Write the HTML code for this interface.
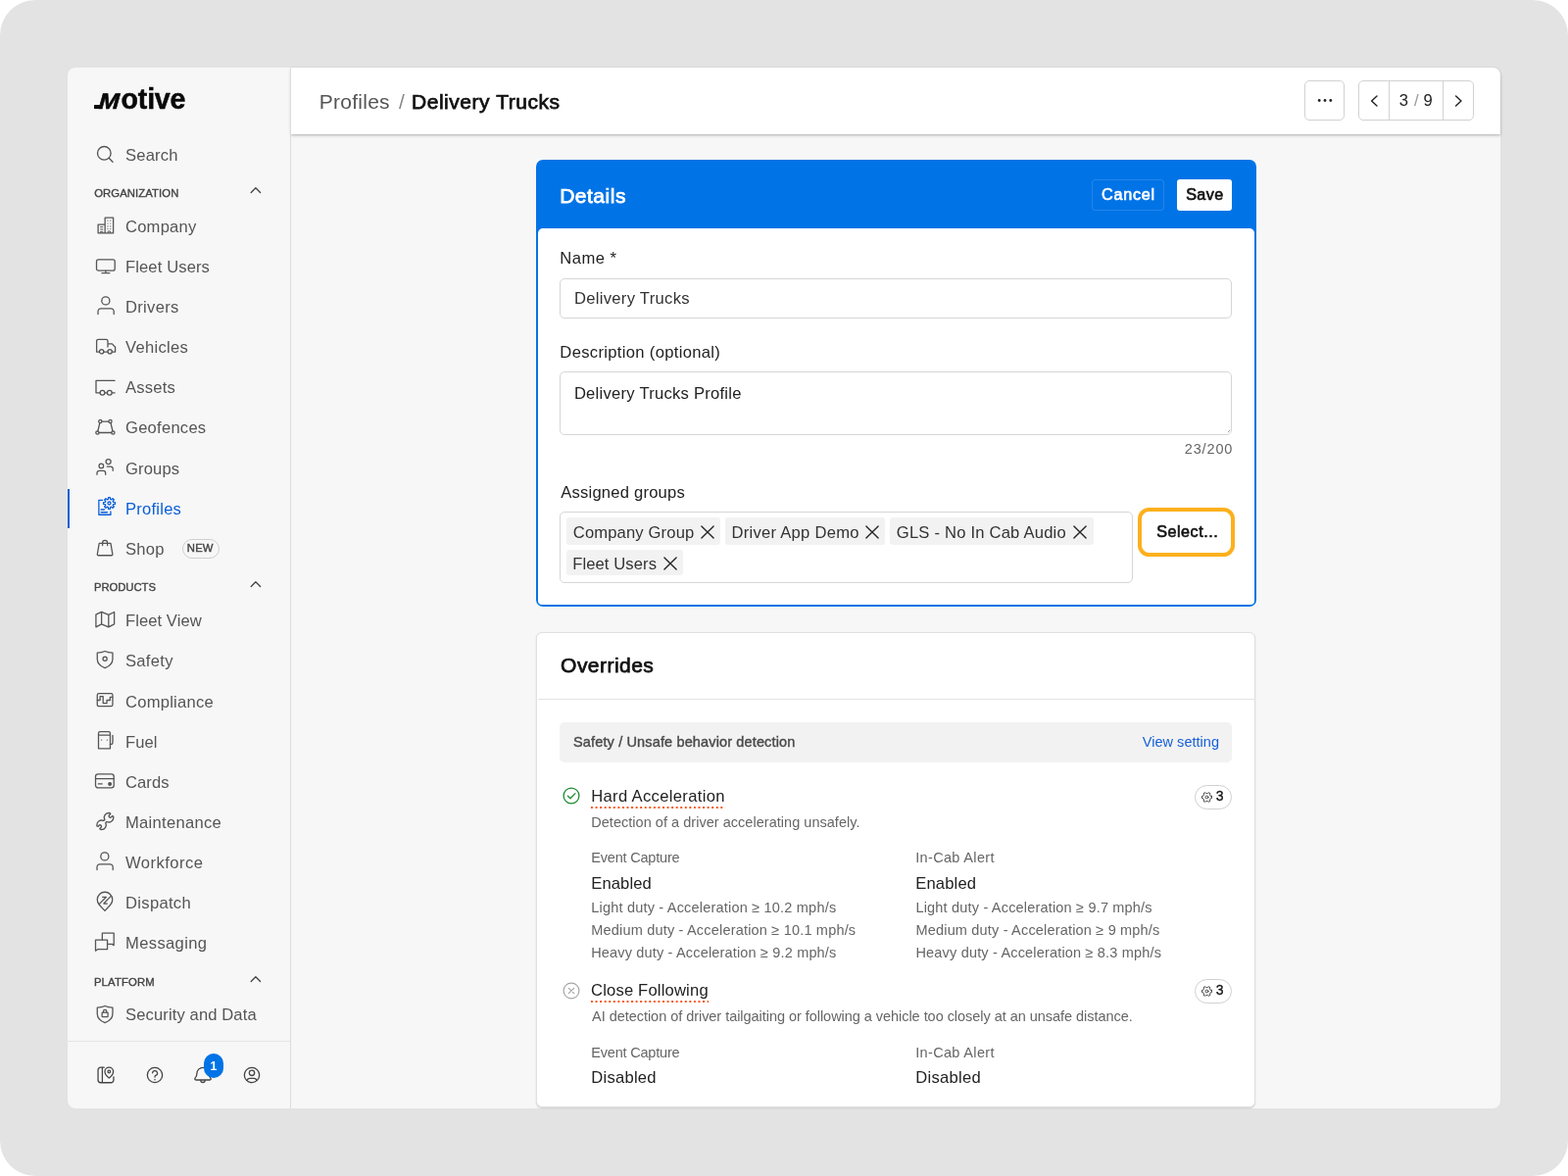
<!DOCTYPE html>
<html lang="en">
<head>
<meta charset="utf-8">
<title>Profiles / Delivery Trucks</title>
<style>
*{box-sizing:border-box;margin:0;padding:0}
html,body{width:1600px;height:1200px;overflow:hidden;background:#fff}
body{font-family:"Liberation Sans",Arial,sans-serif;position:relative;will-change:transform}
body div,body span,body svg,body nav,body header,body main,body section,body button,body h1,body h2,body h3,body p,body a,body label{position:absolute;display:block}
.t{white-space:pre;font-kerning:normal}
button{font:inherit;border:0;background:none}
h1,h2,h3,p{font-weight:400}
a{text-decoration:none}
.g{left:0;top:0;width:0;height:0}
</style>
</head>
<body>
<div style="left:0px;top:0px;width:1600px;height:1200px;background:#e3e3e3;border-radius:36px"></div>
<div style="left:69px;top:69px;width:1462px;height:1062px;background:#f7f7f7;border-radius:8px"></div>
<main class="g">
<section class="g">
<div style="left:547px;top:163px;width:735px;height:456.3px;background:#0073e6;border-radius:7px"></div>
<div style="left:549px;top:233px;width:731px;height:384.2px;background:#fff;border-radius:5px 5px 4px 4px"></div>
<h2 class="t" style="left:571.14px;top:186px;font-size:21px;line-height:27px;color:#fff;letter-spacing:0.523px;-webkit-text-stroke:0.75px #fff;">Details</h2>
<div style="left:1113.6px;top:183px;width:74px;height:32px;border:1px solid rgba(255,255,255,.14);border-radius:3px"></div>
<button class="t" style="left:1124.01px;top:188px;font-size:16.2px;line-height:21px;color:#fff;letter-spacing:0.750px;-webkit-text-stroke:0.62px #fff;">Cancel</button>
<div style="left:1201px;top:182.6px;width:56px;height:32.4px;background:#fff;border-radius:3px"></div>
<button class="t" style="left:1210.21px;top:188px;font-size:16.2px;line-height:21px;color:#111;letter-spacing:0.362px;-webkit-text-stroke:0.62px #111;">Save</button>
<label class="t" style="left:571.33px;top:253px;font-size:16.6px;line-height:22px;color:#222;letter-spacing:0.456px;">Name *</label>
<div style="left:571px;top:283.5px;width:686px;height:41px;border:1px solid #d6d6d6;border-radius:5px;background:#fff"></div>
<span class="t" style="left:585.89px;top:294px;font-size:16.6px;line-height:22px;color:#333;letter-spacing:0.305px;">Delivery Trucks</span>
<label class="t" style="left:571.33px;top:349px;font-size:16.6px;line-height:22px;color:#222;letter-spacing:0.320px;">Description (optional)</label>
<div style="left:571px;top:379px;width:686px;height:64.5px;border:1px solid #d6d6d6;border-radius:5px;background:#fff"></div>
<span class="t" style="left:585.89px;top:391px;font-size:16.6px;line-height:22px;color:#222;letter-spacing:0.251px;">Delivery Trucks Profile</span>
<svg style="left:1250px;top:436px" width="6" height="6" viewBox="0 0 6 6" fill="none" stroke="#8a8a8a" stroke-width="0.9" stroke-linecap="round" stroke-linejoin="round" aria-hidden="true"><path d="M4.9 3.2 L3.2 4.9"/></svg>
<span class="t" style="left:1208.71px;top:449px;font-size:14.5px;line-height:19px;color:#666;letter-spacing:0.870px;">23/200</span>
<label class="t" style="left:572.25px;top:492px;font-size:16.6px;line-height:22px;color:#222;letter-spacing:0.205px;">Assigned groups</label>
<div style="left:571px;top:522px;width:585px;height:73px;border:1px solid #d6d6d6;border-radius:5px;background:#fff"></div>
<div style="left:578.1px;top:528.4px;width:156.9px;height:27.2px;background:#f2f2f2;border-radius:3px"></div>
<span class="t" style="left:584.77px;top:533px;font-size:16.6px;line-height:22px;color:#333;letter-spacing:0.143px;">Company Group</span>
<svg style="left:713.9px;top:535px" width="16" height="16" viewBox="0 0 16 16" fill="none" stroke="#222" stroke-width="1.35" stroke-linecap="round" stroke-linejoin="round" aria-hidden="true"><path d="M1.9 1.9 L14.1 14.1 M14.1 1.9 L1.9 14.1"/></svg>
<div style="left:739.8px;top:528.4px;width:163.2px;height:27.2px;background:#f2f2f2;border-radius:3px"></div>
<span class="t" style="left:746.52px;top:533px;font-size:16.6px;line-height:22px;color:#333;letter-spacing:0.257px;">Driver App Demo</span>
<svg style="left:882.25px;top:535px" width="16" height="16" viewBox="0 0 16 16" fill="none" stroke="#222" stroke-width="1.35" stroke-linecap="round" stroke-linejoin="round" aria-hidden="true"><path d="M1.9 1.9 L14.1 14.1 M14.1 1.9 L1.9 14.1"/></svg>
<div style="left:907.5px;top:528.4px;width:208px;height:27.2px;background:#f2f2f2;border-radius:3px"></div>
<span class="t" style="left:914.82px;top:533px;font-size:16.6px;line-height:22px;color:#333;letter-spacing:0.204px;">GLS - No In Cab Audio</span>
<svg style="left:1093.75px;top:535px" width="16" height="16" viewBox="0 0 16 16" fill="none" stroke="#222" stroke-width="1.35" stroke-linecap="round" stroke-linejoin="round" aria-hidden="true"><path d="M1.9 1.9 L14.1 14.1 M14.1 1.9 L1.9 14.1"/></svg>
<div style="left:578.1px;top:560.6px;width:119.4px;height:26.9px;background:#f2f2f2;border-radius:3px"></div>
<span class="t" style="left:584.17px;top:565px;font-size:16.6px;line-height:22px;color:#333;letter-spacing:0.098px;">Fleet Users</span>
<svg style="left:676.4px;top:567px" width="16" height="16" viewBox="0 0 16 16" fill="none" stroke="#222" stroke-width="1.35" stroke-linecap="round" stroke-linejoin="round" aria-hidden="true"><path d="M1.9 1.9 L14.1 14.1 M14.1 1.9 L1.9 14.1"/></svg>
<div style="left:1160.8px;top:517.8px;width:99.4px;height:50px;border:4.4px solid #fcb01e;border-radius:11.5px;background:#fff"></div>
<button class="t" style="left:1180.14px;top:532px;font-size:16.2px;line-height:21px;color:#111;letter-spacing:0.509px;-webkit-text-stroke:0.62px #111;">Select...</button>
</section>
<section class="g">
<div style="left:547px;top:644.5px;width:733.5px;height:485.5px;background:#fff;border:1px solid #e0e0e0;border-radius:6px;box-shadow:0 1px 1.5px rgba(0,0,0,.16)"></div>
<h2 class="t" style="left:572.10px;top:665px;font-size:21px;line-height:27px;color:#111;letter-spacing:0.467px;-webkit-text-stroke:0.75px #111;">Overrides</h2>
<div style="left:548.5px;top:713px;width:731px;height:1px;background:#e4e4e4"></div>
<div style="left:571.4px;top:737px;width:685.6px;height:40.6px;background:#f2f2f2;border-radius:5px"></div>
<span class="t" style="left:585.06px;top:748px;font-size:14.5px;line-height:19px;color:#4a4a4a;letter-spacing:0.139px;-webkit-text-stroke:0.4px #4a4a4a;">Safety / Unsafe behavior detection</span>
<a class="t" style="left:1165.82px;top:748px;font-size:14.5px;line-height:19px;color:#1660d8;letter-spacing:0.020px;">View setting</a>
<svg style="left:572.75px;top:802.4px" width="20" height="20" viewBox="0 0 20 20" fill="none" stroke="#1e8a2e" stroke-width="1.3" stroke-linecap="round" stroke-linejoin="round" aria-hidden="true"><circle cx="10" cy="10" r="7.9"/><path d="M6.4 10.3 L9 12.7 L13.9 7.6"/></svg>
<h3 class="t" style="left:603.21px;top:802px;font-size:16.6px;line-height:22px;color:#222;letter-spacing:0.330px;">Hard Acceleration</h3>
<div style="left:603.2px;top:823.4px;width:136.5px;height:2.4px;background:radial-gradient(circle at 1.2px 1.2px,#f4571b 0.95px,rgba(244,87,27,0) 1.3px) 0 0/4.57px 2.4px repeat-x"></div>
<p class="t" style="left:603.23px;top:830px;font-size:14.5px;line-height:19px;color:#666;letter-spacing:0.031px;">Detection of a driver accelerating unsafely.</p>
<span class="t" style="left:603.23px;top:866px;font-size:14.5px;line-height:19px;color:#666;letter-spacing:-0.188px;">Event Capture</span>
<span class="t" style="left:934.21px;top:866px;font-size:14.5px;line-height:19px;color:#666;letter-spacing:0.340px;">In-Cab Alert</span>
<span class="t" style="left:603.21px;top:891px;font-size:16.6px;line-height:22px;color:#222;letter-spacing:0.109px;">Enabled</span>
<span class="t" style="left:934.17px;top:891px;font-size:16.6px;line-height:22px;color:#222;letter-spacing:0.174px;">Enabled</span>
<span class="t" style="left:603.23px;top:917px;font-size:14.5px;line-height:19px;color:#666;letter-spacing:0.200px;">Light duty - Acceleration ≥ 10.2 mph/s</span>
<span class="t" style="left:603.23px;top:940px;font-size:14.5px;line-height:19px;color:#666;letter-spacing:0.191px;">Medium duty - Acceleration ≥ 10.1 mph/s</span>
<span class="t" style="left:603.23px;top:963px;font-size:14.5px;line-height:19px;color:#666;letter-spacing:0.166px;">Heavy duty - Acceleration ≥ 9.2 mph/s</span>
<span class="t" style="left:934.47px;top:917px;font-size:14.5px;line-height:19px;color:#666;letter-spacing:0.185px;">Light duty - Acceleration ≥ 9.7 mph/s</span>
<span class="t" style="left:934.47px;top:940px;font-size:14.5px;line-height:19px;color:#666;letter-spacing:0.182px;">Medium duty - Acceleration ≥ 9 mph/s</span>
<span class="t" style="left:934.47px;top:963px;font-size:14.5px;line-height:19px;color:#666;letter-spacing:0.176px;">Heavy duty - Acceleration ≥ 8.3 mph/s</span>
<div style="left:1219px;top:801px;width:37.6px;height:24.6px;border:1px solid #d0d0d0;border-radius:13px;background:#fff"></div>
<svg style="left:1224.5px;top:806.6px" width="13" height="13" viewBox="0 0 13 13" fill="none" stroke="#333" stroke-width="0.9" stroke-linecap="round" stroke-linejoin="round" aria-hidden="true"><path d="M11.49 5.44 L11.49 7.56 L10.28 7.82 L9.53 9.11 L9.91 10.29 L8.08 11.35 L7.25 10.43 L5.75 10.43 L4.92 11.35 L3.09 10.29 L3.47 9.11 L2.72 7.82 L1.51 7.56 L1.51 5.44 L2.72 5.18 L3.47 3.89 L3.09 2.71 L4.92 1.65 L5.75 2.57 L7.25 2.57 L8.08 1.65 L9.91 2.71 L9.53 3.89 L10.28 5.18 Z" stroke-linejoin="round"/><circle cx="6.5" cy="6.5" r="1.4"/></svg>
<span class="t" style="left:1240.84px;top:803px;font-size:14px;line-height:18px;color:#111;-webkit-text-stroke:0.3px #111;">3</span>
<svg style="left:572.75px;top:1000.55px" width="20" height="20" viewBox="0 0 20 20" fill="none" stroke="#a6a6a6" stroke-width="1.2" stroke-linecap="round" stroke-linejoin="round" aria-hidden="true"><circle cx="10" cy="10" r="7.9"/><path d="M7.3 7.3 L12.7 12.7 M12.7 7.3 L7.3 12.7"/></svg>
<h3 class="t" style="left:603.00px;top:1000px;font-size:16.6px;line-height:22px;color:#222;letter-spacing:0.177px;">Close Following</h3>
<div style="left:603.2px;top:1021.4px;width:119.6px;height:2.4px;background:radial-gradient(circle at 1.2px 1.2px,#f4571b 0.95px,rgba(244,87,27,0) 1.3px) 0 0/4.57px 2.4px repeat-x"></div>
<p class="t" style="left:604.08px;top:1028px;font-size:14.5px;line-height:19px;color:#666;letter-spacing:-0.041px;">AI detection of driver tailgaiting or following a vehicle too closely at an unsafe distance.</p>
<span class="t" style="left:603.23px;top:1065px;font-size:14.5px;line-height:19px;color:#666;letter-spacing:-0.188px;">Event Capture</span>
<span class="t" style="left:934.21px;top:1065px;font-size:14.5px;line-height:19px;color:#666;letter-spacing:0.340px;">In-Cab Alert</span>
<span class="t" style="left:603.21px;top:1089px;font-size:16.6px;line-height:22px;color:#222;letter-spacing:0.258px;">Disabled</span>
<span class="t" style="left:934.17px;top:1089px;font-size:16.6px;line-height:22px;color:#222;letter-spacing:0.294px;">Disabled</span>
<div style="left:1219px;top:999.2px;width:37.6px;height:24.6px;border:1px solid #d0d0d0;border-radius:13px;background:#fff"></div>
<svg style="left:1224.5px;top:1004.8px" width="13" height="13" viewBox="0 0 13 13" fill="none" stroke="#333" stroke-width="0.9" stroke-linecap="round" stroke-linejoin="round" aria-hidden="true"><path d="M11.49 5.44 L11.49 7.56 L10.28 7.82 L9.53 9.11 L9.91 10.29 L8.08 11.35 L7.25 10.43 L5.75 10.43 L4.92 11.35 L3.09 10.29 L3.47 9.11 L2.72 7.82 L1.51 7.56 L1.51 5.44 L2.72 5.18 L3.47 3.89 L3.09 2.71 L4.92 1.65 L5.75 2.57 L7.25 2.57 L8.08 1.65 L9.91 2.71 L9.53 3.89 L10.28 5.18 Z" stroke-linejoin="round"/><circle cx="6.5" cy="6.5" r="1.4"/></svg>
<span class="t" style="left:1240.84px;top:1001px;font-size:14px;line-height:18px;color:#111;-webkit-text-stroke:0.3px #111;">3</span>
</section>
</main>
<header class="g">
<div style="left:297px;top:69px;width:1234px;height:68px;background:#fff;border-radius:0 8px 0 0;box-shadow:0 1px 2.5px rgba(0,0,0,.24),0 2px 5px rgba(0,0,0,.07)"></div>
<span class="t" style="left:325.79px;top:90px;font-size:21px;line-height:27px;color:#555;letter-spacing:0.251px;">Profiles</span>
<span class="t" style="left:407.08px;top:90px;font-size:21px;line-height:27px;color:#888;">/</span>
<h1 class="t" style="left:420.00px;top:90px;font-size:21px;line-height:27px;color:#111;letter-spacing:0.536px;-webkit-text-stroke:0.75px #111;">Delivery Trucks</h1>
<div style="left:1331px;top:82.3px;width:41px;height:41px;border:1px solid #d2d2d2;border-radius:5px;background:#fff"></div>
<svg style="left:1343px;top:98.2px" width="18" height="9" viewBox="0 0 18 9" fill="none" stroke="none" stroke-width="0" stroke-linecap="round" stroke-linejoin="round" aria-hidden="true"><circle cx="3.2" cy="4.5" r="1.4" fill="#222"/><circle cx="9" cy="4.5" r="1.4" fill="#222"/><circle cx="14.8" cy="4.5" r="1.4" fill="#222"/></svg>
<div style="left:1386px;top:82.3px;width:118px;height:41px;border:1px solid #d2d2d2;border-radius:5px;background:#fff"></div>
<div style="left:1417.2px;top:83.3px;width:1px;height:39px;background:#d2d2d2"></div>
<div style="left:1472.2px;top:83.3px;width:1px;height:39px;background:#d2d2d2"></div>
<svg style="left:1393.6px;top:95px" width="16" height="16" viewBox="0 0 16 16" fill="none" stroke="#222" stroke-width="1.4" stroke-linecap="round" stroke-linejoin="round" aria-hidden="true"><path d="M11 3 L5.6 8 L11 13"/></svg>
<svg style="left:1480.2px;top:95px" width="16" height="16" viewBox="0 0 16 16" fill="none" stroke="#222" stroke-width="1.4" stroke-linecap="round" stroke-linejoin="round" aria-hidden="true"><path d="M5.6 3 L11 8 L5.6 13"/></svg>
<span class="t" style="left:1427.82px;top:92px;font-size:16.6px;line-height:22px;color:#222;">3</span>
<span class="t" style="left:1442.95px;top:92px;font-size:16.6px;line-height:22px;color:#999;">/</span>
<span class="t" style="left:1452.53px;top:92px;font-size:16.6px;line-height:22px;color:#222;">9</span>
</header>
<nav class="g">
<div style="left:296px;top:69px;width:1px;height:1062px;background:#dcdcdc"></div>
<div style="left:69px;top:1062px;width:227px;height:1px;background:#e4e4e4"></div>
<div style="left:69px;top:498.7px;width:1.6px;height:40.7px;background:#0b5fd9"></div>
<div class="g">
<div style="left:96.1px;top:107.4px;width:7.4px;height:3.9px;background:#0a0a0a;border-radius:0.5px"></div>
<span class="t" style="left:100.32px;top:89px;font-size:22.4px;line-height:29px;color:#0a0a0a;font-weight:700;-webkit-text-stroke:0.6px #0a0a0a;font-style:italic;transform-origin:0 100%;transform:scaleX(1.12) skewX(-3deg);">M</span><span class="t" style="left:123.60px;top:83px;font-size:28.6px;line-height:37px;color:#0a0a0a;font-weight:700;letter-spacing:-0.223px;-webkit-text-stroke:0.5px #0a0a0a;">otive</span>
</div>
<svg style="left:97px;top:147px" width="20" height="20" viewBox="0 0 20 20" fill="none" stroke="#555" stroke-width="1.35" stroke-linecap="round" stroke-linejoin="round" aria-hidden="true"><circle cx="9.3" cy="9.3" r="6.8"/><path d="M14.2 14.3 L18 18.2"/></svg>
<span class="t" style="left:128.00px;top:148px;font-size:16.6px;line-height:22px;color:#555;letter-spacing:0.182px;">Search</span>
<span class="t" style="left:96.24px;top:190px;font-size:11.3px;line-height:15px;color:#444;letter-spacing:0.083px;-webkit-text-stroke:0.36px #444;">ORGANIZATION</span>
<svg style="left:254px;top:188.9px" width="14" height="10" viewBox="0 0 14 10" fill="none" stroke="#444" stroke-width="1.3" stroke-linecap="round" stroke-linejoin="round" aria-hidden="true"><path d="M2.2 7.5 L6.9 2.7 L11.6 7.5"/></svg>
<span class="t" style="left:128.00px;top:221px;font-size:16.6px;line-height:22px;color:#555;letter-spacing:0.197px;">Company</span>
<span class="t" style="left:128.00px;top:262px;font-size:16.6px;line-height:22px;color:#555;letter-spacing:0.106px;">Fleet Users</span>
<span class="t" style="left:128.00px;top:303px;font-size:16.6px;line-height:22px;color:#555;letter-spacing:0.296px;">Drivers</span>
<span class="t" style="left:128.00px;top:344px;font-size:16.6px;line-height:22px;color:#555;letter-spacing:0.298px;">Vehicles</span>
<span class="t" style="left:128.00px;top:385px;font-size:16.6px;line-height:22px;color:#555;letter-spacing:0.218px;">Assets</span>
<span class="t" style="left:128.00px;top:426px;font-size:16.6px;line-height:22px;color:#555;letter-spacing:0.236px;">Geofences</span>
<span class="t" style="left:128.00px;top:468px;font-size:16.6px;line-height:22px;color:#555;letter-spacing:0.146px;">Groups</span>
<span class="t" style="left:128.00px;top:509px;font-size:16.6px;line-height:22px;color:#0b5fd9;letter-spacing:0.223px;">Profiles</span>
<span class="t" style="left:128.00px;top:550px;font-size:16.6px;line-height:22px;color:#555;letter-spacing:0.241px;">Shop</span>
<div style="left:185.5px;top:550.4px;width:38.5px;height:19.8px;border:1px solid #cfcfcf;border-radius:10px"></div>
<span class="t" style="left:190.79px;top:552px;font-size:11.3px;line-height:15px;color:#444;letter-spacing:0.192px;-webkit-text-stroke:0.4px #444;">NEW</span>
<span class="t" style="left:95.91px;top:592px;font-size:11.3px;line-height:15px;color:#444;letter-spacing:-0.044px;-webkit-text-stroke:0.36px #444;">PRODUCTS</span>
<svg style="left:254px;top:591px" width="14" height="10" viewBox="0 0 14 10" fill="none" stroke="#444" stroke-width="1.3" stroke-linecap="round" stroke-linejoin="round" aria-hidden="true"><path d="M2.2 7.5 L6.9 2.7 L11.6 7.5"/></svg>
<span class="t" style="left:128.00px;top:623px;font-size:16.6px;line-height:22px;color:#555;letter-spacing:0.060px;">Fleet View</span>
<span class="t" style="left:128.00px;top:664px;font-size:16.6px;line-height:22px;color:#555;letter-spacing:0.284px;">Safety</span>
<span class="t" style="left:128.00px;top:706px;font-size:16.6px;line-height:22px;color:#555;letter-spacing:0.231px;">Compliance</span>
<span class="t" style="left:128.00px;top:747px;font-size:16.6px;line-height:22px;color:#555;letter-spacing:0.022px;">Fuel</span>
<span class="t" style="left:128.00px;top:788px;font-size:16.6px;line-height:22px;color:#555;letter-spacing:0.067px;">Cards</span>
<span class="t" style="left:128.00px;top:829px;font-size:16.6px;line-height:22px;color:#555;letter-spacing:0.268px;">Maintenance</span>
<span class="t" style="left:128.00px;top:870px;font-size:16.6px;line-height:22px;color:#555;letter-spacing:0.463px;">Workforce</span>
<span class="t" style="left:128.00px;top:911px;font-size:16.6px;line-height:22px;color:#555;letter-spacing:0.303px;">Dispatch</span>
<span class="t" style="left:128.00px;top:952px;font-size:16.6px;line-height:22px;color:#555;letter-spacing:0.349px;">Messaging</span>
<span class="t" style="left:95.91px;top:995px;font-size:11.3px;line-height:15px;color:#444;letter-spacing:0.167px;-webkit-text-stroke:0.36px #444;">PLATFORM</span>
<svg style="left:254px;top:993.5px" width="14" height="10" viewBox="0 0 14 10" fill="none" stroke="#444" stroke-width="1.3" stroke-linecap="round" stroke-linejoin="round" aria-hidden="true"><path d="M2.2 7.5 L6.9 2.7 L11.6 7.5"/></svg>
<span class="t" style="left:128.00px;top:1025px;font-size:16.6px;line-height:22px;color:#555;letter-spacing:0.110px;">Security and Data</span>
<svg style="left:96px;top:218px" width="24" height="24" viewBox="0 0 24 24" fill="none" stroke="#555" stroke-width="1.3" stroke-linecap="round" stroke-linejoin="round" aria-hidden="true"><path d="M11.15 19.85 V4.15 H19.6 V19.85 H4.1 V11.2 H11.15"/><path d="M14 7.1h.01M16.8 7.1h.01M14 10h.01M16.8 10h.01M14 12.9h.01M16.8 12.9h.01M14 15.6h.01M16.8 15.6h.01" stroke-width="1.2"/><path d="M6.6 13.6 H8.8 M6.6 16 H8.8" stroke-width="1"/><path d="M6.4 19.6 V18.3 H8.8 V19.6 M14.2 19.6 V18 H16.6 V19.6" stroke-width="1"/></svg>
<svg style="left:96px;top:259.14px" width="24" height="24" viewBox="0 0 24 24" fill="none" stroke="#555" stroke-width="1.3" stroke-linecap="round" stroke-linejoin="round" aria-hidden="true"><rect x="2.5" y="5.9" width="18.7" height="11.2" rx="1.9"/><path d="M11.85 17.2 V19.5 M8 19.7 H15.8"/></svg>
<svg style="left:96px;top:300.28px" width="24" height="24" viewBox="0 0 24 24" fill="none" stroke="#555" stroke-width="1.3" stroke-linecap="round" stroke-linejoin="round" aria-hidden="true"><circle cx="11.85" cy="6.9" r="4.05"/><path d="M4 20.6 V17.7 A2.9 2.9 0 0 1 6.9 14.8 H17.3 A2.9 2.9 0 0 1 20.2 17.7 V20.6"/></svg>
<svg style="left:96px;top:341.42px" width="24" height="24" viewBox="0 0 24 24" fill="none" stroke="#555" stroke-width="1.3" stroke-linecap="round" stroke-linejoin="round" aria-hidden="true"><path d="M5.5 18.1 H2.6 V7.1 A1.8 1.8 0 0 1 4.4 5.3 H12.2 A1.8 1.8 0 0 1 14 7.1 V13.1 M9.8 18.1 H14 M18.3 18.1 H21.6 V13.2 L18.4 9.9 H14"/><circle cx="7.65" cy="17.8" r="2.15"/><circle cx="16.15" cy="17.8" r="2.15"/></svg>
<svg style="left:96px;top:382.56px" width="24" height="24" viewBox="0 0 24 24" fill="none" stroke="#555" stroke-width="1.3" stroke-linecap="round" stroke-linejoin="round" aria-hidden="true"><path d="M21.1 5.3 H2 V17.8 H6 M11 17.8 H13.3 M18.3 17.8 H21.1"/><circle cx="8.5" cy="17.8" r="2.4"/><circle cx="15.8" cy="17.8" r="2.4"/></svg>
<svg style="left:96px;top:423.7px" width="24" height="24" viewBox="0 0 24 24" fill="none" stroke="#555" stroke-width="1.3" stroke-linecap="round" stroke-linejoin="round" aria-hidden="true"><path d="M7.8 6.2 H14.9 M16.95 7.5 L19 16 M17.8 17.5 H5 M3.8 16 L5.85 7.5"/><circle cx="6.25" cy="6" r="1.6"/><circle cx="16.5" cy="6" r="1.6"/><circle cx="3.4" cy="17.5" r="1.6"/><circle cx="19.4" cy="17.5" r="1.6"/></svg>
<svg style="left:95.3px;top:464.34px" width="24" height="24" viewBox="0 0 24 24" fill="none" stroke="#555" stroke-width="1.3" stroke-linecap="round" stroke-linejoin="round" aria-hidden="true"><circle cx="15.6" cy="7.05" r="2.5"/><circle cx="8.35" cy="11.4" r="2.3"/><path d="M14.2 12.1 H17.9 A2.3 2.3 0 0 1 20.2 14.4 V16.3 M4 20.3 V18.7 A2.3 2.3 0 0 1 6.3 16.4 H10.4 A2.3 2.3 0 0 1 12.7 18.7 V20.3"/></svg>
<svg style="left:95.4px;top:547.12px" width="24" height="24" viewBox="0 0 24 24" fill="none" stroke="#555" stroke-width="1.3" stroke-linecap="round" stroke-linejoin="round" aria-hidden="true"><path d="M6.2 7.3 H17.95 L19.9 18.6 A1 1 0 0 1 18.9 19.75 H5.3 A1 1 0 0 1 4.3 18.6 Z"/><path d="M9.6 9.6 V6.9 A2.5 2.5 0 0 1 14.6 6.9 V9.6"/></svg>
<svg style="left:95.4px;top:620.2px" width="24" height="24" viewBox="0 0 24 24" fill="none" stroke="#555" stroke-width="1.3" stroke-linecap="round" stroke-linejoin="round" aria-hidden="true"><path d="M2.9 7.2 L8.6 4.4 L15.8 7.3 L21.6 4.5 V16.8 L15.8 19.8 L8.6 16.9 L2.9 19.8 Z M8.6 4.4 V16.9 M15.8 7.3 V19.8"/></svg>
<svg style="left:95.4px;top:661.34px" width="24" height="24" viewBox="0 0 24 24" fill="none" stroke="#555" stroke-width="1.3" stroke-linecap="round" stroke-linejoin="round" aria-hidden="true"><path d="M12.1 3.5 C9.4 4.7 7 5 4.25 5.1 V11.6 C4.25 15.8 7.2 18.8 12.1 20.7 C17 18.8 19.95 15.8 19.95 11.6 V5.1 C17.2 5 14.8 4.7 12.1 3.5 Z"/><circle cx="12.1" cy="11.35" r="2.1"/></svg>
<svg style="left:95.4px;top:702.48px" width="24" height="24" viewBox="0 0 24 24" fill="none" stroke="#555" stroke-width="1.3" stroke-linecap="round" stroke-linejoin="round" aria-hidden="true"><rect x="4.25" y="5.6" width="15.7" height="13.1" rx="1.7"/><path d="M4.4 12.5 H7.1 V8.7 H10.2 V15.6 H14 V12.5 H17.35 V9.35 H19.8"/></svg>
<svg style="left:95.4px;top:743.62px" width="24" height="24" viewBox="0 0 24 24" fill="none" stroke="#555" stroke-width="1.3" stroke-linecap="round" stroke-linejoin="round" aria-hidden="true"><path d="M5.5 19.8 V4.2 A1.6 1.6 0 0 1 7.1 2.6 H15.85 A1.6 1.6 0 0 1 17.45 4.2 V19.8 Z M5.5 6.2 H17.45"/><path d="M17.45 15.4 H18.4 A1.6 1.6 0 0 0 20 13.8 V6.4"/><path d="M8.6 11.1h.01M14.35 11.1h.01" stroke-width="1.4"/></svg>
<svg style="left:95.4px;top:784.76px" width="24" height="24" viewBox="0 0 24 24" fill="none" stroke="#555" stroke-width="1.3" stroke-linecap="round" stroke-linejoin="round" aria-hidden="true"><rect x="2.5" y="4.85" width="18.7" height="14.1" rx="2.6"/><path d="M2.6 9.55 H21.1 M5.4 14.95 H9.2"/><circle cx="17.1" cy="14.95" r="1.35" fill="#555"/></svg>
<svg style="left:95.4px;top:825.9px" width="24" height="24" viewBox="0 0 24 24" fill="none" stroke="#555" stroke-width="1.3" stroke-linecap="round" stroke-linejoin="round" aria-hidden="true"><path transform="translate(12.3 12.0) rotate(-45) scale(1.06)" d="M-0.72 -1.4 L0.72 -1.4 A4.5 4.5 0 0 1 8.3 -3.05 Q9.3 -2.1 8.6 -1.35 L7.0 -1.35 A1.35 1.35 0 0 0 7.0 1.35 L8.6 1.35 Q9.3 2.1 8.3 3.05 A4.5 4.5 0 0 1 0.72 1.4 L-0.72 1.4 A4.5 4.5 0 0 1 -8.3 3.05 Q-9.3 2.1 -8.6 1.35 L-7.0 1.35 A1.35 1.35 0 0 0 -7.0 -1.35 L-8.6 -1.35 Q-9.3 -2.1 -8.3 -3.05 A4.5 4.5 0 0 1 -0.72 -1.4 Z"/></svg>
<svg style="left:95.4px;top:867.04px" width="24" height="24" viewBox="0 0 24 24" fill="none" stroke="#555" stroke-width="1.3" stroke-linecap="round" stroke-linejoin="round" aria-hidden="true"><circle cx="11.85" cy="6.9" r="4.05"/><path d="M4 20.6 V17.7 A2.9 2.9 0 0 1 6.9 14.8 H17.3 A2.9 2.9 0 0 1 20.2 17.7 V20.6"/></svg>
<svg style="left:95.4px;top:908.18px" width="24" height="24" viewBox="0 0 24 24" fill="none" stroke="#555" stroke-width="1.3" stroke-linecap="round" stroke-linejoin="round" aria-hidden="true"><path d="M12 21.4 L6.3 15.25 A7.75 7.75 0 1 1 17.7 15.25 Z"/><path d="M9.6 7.3 H13.4 L6.2 14.6 M18.2 6.4 L10.9 14 H14.3" stroke-width="1.25"/></svg>
<svg style="left:95.4px;top:949.32px" width="24" height="24" viewBox="0 0 24 24" fill="none" stroke="#555" stroke-width="1.3" stroke-linecap="round" stroke-linejoin="round" aria-hidden="true"><path d="M9.35 10 V3.2 H21.2 V15.6 L19.4 14.4 H14.6"/><path d="M2.5 10.05 H14.55 V19.7 H4.6 L2.5 21.2 Z"/></svg>
<svg style="left:95.4px;top:1022.6px" width="24" height="24" viewBox="0 0 24 24" fill="none" stroke="#555" stroke-width="1.3" stroke-linecap="round" stroke-linejoin="round" aria-hidden="true"><path d="M12.1 3.5 C9.4 4.7 7 5 4.25 5.1 V11.6 C4.25 15.8 7.2 18.8 12.1 20.7 C17 18.8 19.95 15.8 19.95 11.6 V5.1 C17.2 5 14.8 4.7 12.1 3.5 Z"/><rect x="9.1" y="10.1" width="6" height="4.6" rx="0.6"/><path d="M10.5 10.1 V8.9 A1.6 1.6 0 0 1 13.7 8.9 V10.1"/></svg>
<svg style="left:95.3px;top:505.98px" width="24" height="24" viewBox="0 0 24 24" fill="none" stroke="#0b5fd9" stroke-width="1.3" stroke-linecap="round" stroke-linejoin="round" aria-hidden="true"><path d="M9.6 4.4 H5.85 V19.25 H17.95 V15.9 M8.1 14 H11.5 M8.1 16.75 H14.4"/><path d="M22.43 6.56 L22.43 8.44 L20.66 8.57 L20.20 9.69 L21.35 11.03 L20.03 12.35 L18.69 11.20 L17.57 11.66 L17.44 13.43 L15.56 13.43 L15.43 11.66 L14.31 11.20 L12.97 12.35 L11.65 11.03 L12.80 9.69 L12.34 8.57 L10.57 8.44 L10.57 6.56 L12.34 6.43 L12.80 5.31 L11.65 3.97 L12.97 2.65 L14.31 3.80 L15.43 3.34 L15.56 1.57 L17.44 1.57 L17.57 3.34 L18.69 3.80 L20.03 2.65 L21.35 3.97 L20.20 5.31 L20.66 6.43 Z"/><circle cx="16.5" cy="7.5" r="1.5"/></svg>
<svg style="left:95.65px;top:1085.2px" width="24" height="24" viewBox="0 0 24 24" fill="none" stroke="#444" stroke-width="1.3" stroke-linecap="round" stroke-linejoin="round" aria-hidden="true"><path d="M10.2 4.2 H6.8 A2.75 2.75 0 0 0 4.05 6.95 V17 A2.75 2.75 0 0 0 6.8 19.75 H17.2 A2.75 2.75 0 0 0 19.95 17 V14 M8.4 4.2 V19.75"/><path d="M15.3 15 C15.3 15 11 11.6 11 8.5 A4.3 4.3 0 0 1 19.6 8.5 C19.6 11.6 15.3 15 15.3 15 Z"/><circle cx="15.3" cy="8.5" r="1.3"/></svg>
<svg style="left:145.66px;top:1085.2px" width="24" height="24" viewBox="0 0 24 24" fill="none" stroke="#444" stroke-width="1.3" stroke-linecap="round" stroke-linejoin="round" aria-hidden="true"><circle cx="12" cy="12" r="7.65"/><path d="M9.6 9.9 A2.5 2.5 0 1 1 12.9 12.4 C12.3 12.7 12 13.1 12 13.8 V14.2" stroke-width="1.2"/><path d="M12 16.7h.01" stroke-width="1.6"/></svg>
<svg style="left:194.9px;top:1085.2px" width="24" height="24" viewBox="0 0 24 24" fill="none" stroke="#444" stroke-width="1.3" stroke-linecap="round" stroke-linejoin="round" aria-hidden="true"><path d="M5 17 C3.8 17 3.4 15.9 4.1 15.1 C5.4 13.6 5.9 12.6 5.9 10.4 A6.1 6.1 0 0 1 18.1 10.4 C18.1 12.6 18.6 13.6 19.9 15.1 C20.6 15.9 20.2 17 19 17 Z"/><path d="M9.8 17.3 A2.2 2.2 0 0 0 14.2 17.3"/></svg>
<svg style="left:245.3px;top:1085.2px" width="24" height="24" viewBox="0 0 24 24" fill="none" stroke="#444" stroke-width="1.3" stroke-linecap="round" stroke-linejoin="round" aria-hidden="true"><circle cx="12" cy="12" r="7.65"/><circle cx="12" cy="9.8" r="2.7"/><path d="M6.9 17.4 C7.6 15.9 8.6 15.4 9.8 15.4 H14.2 C15.4 15.4 16.4 15.9 17.1 17.4"/></svg>
<div style="left:207.5px;top:1075px;width:20.2px;height:25px;background:#0073e6;border-radius:10.1px"></div>
<span class="t" style="left:214.54px;top:1080px;font-size:12.4px;line-height:16px;color:#fff;font-weight:700;">1</span>
</nav>
</body>
</html>
